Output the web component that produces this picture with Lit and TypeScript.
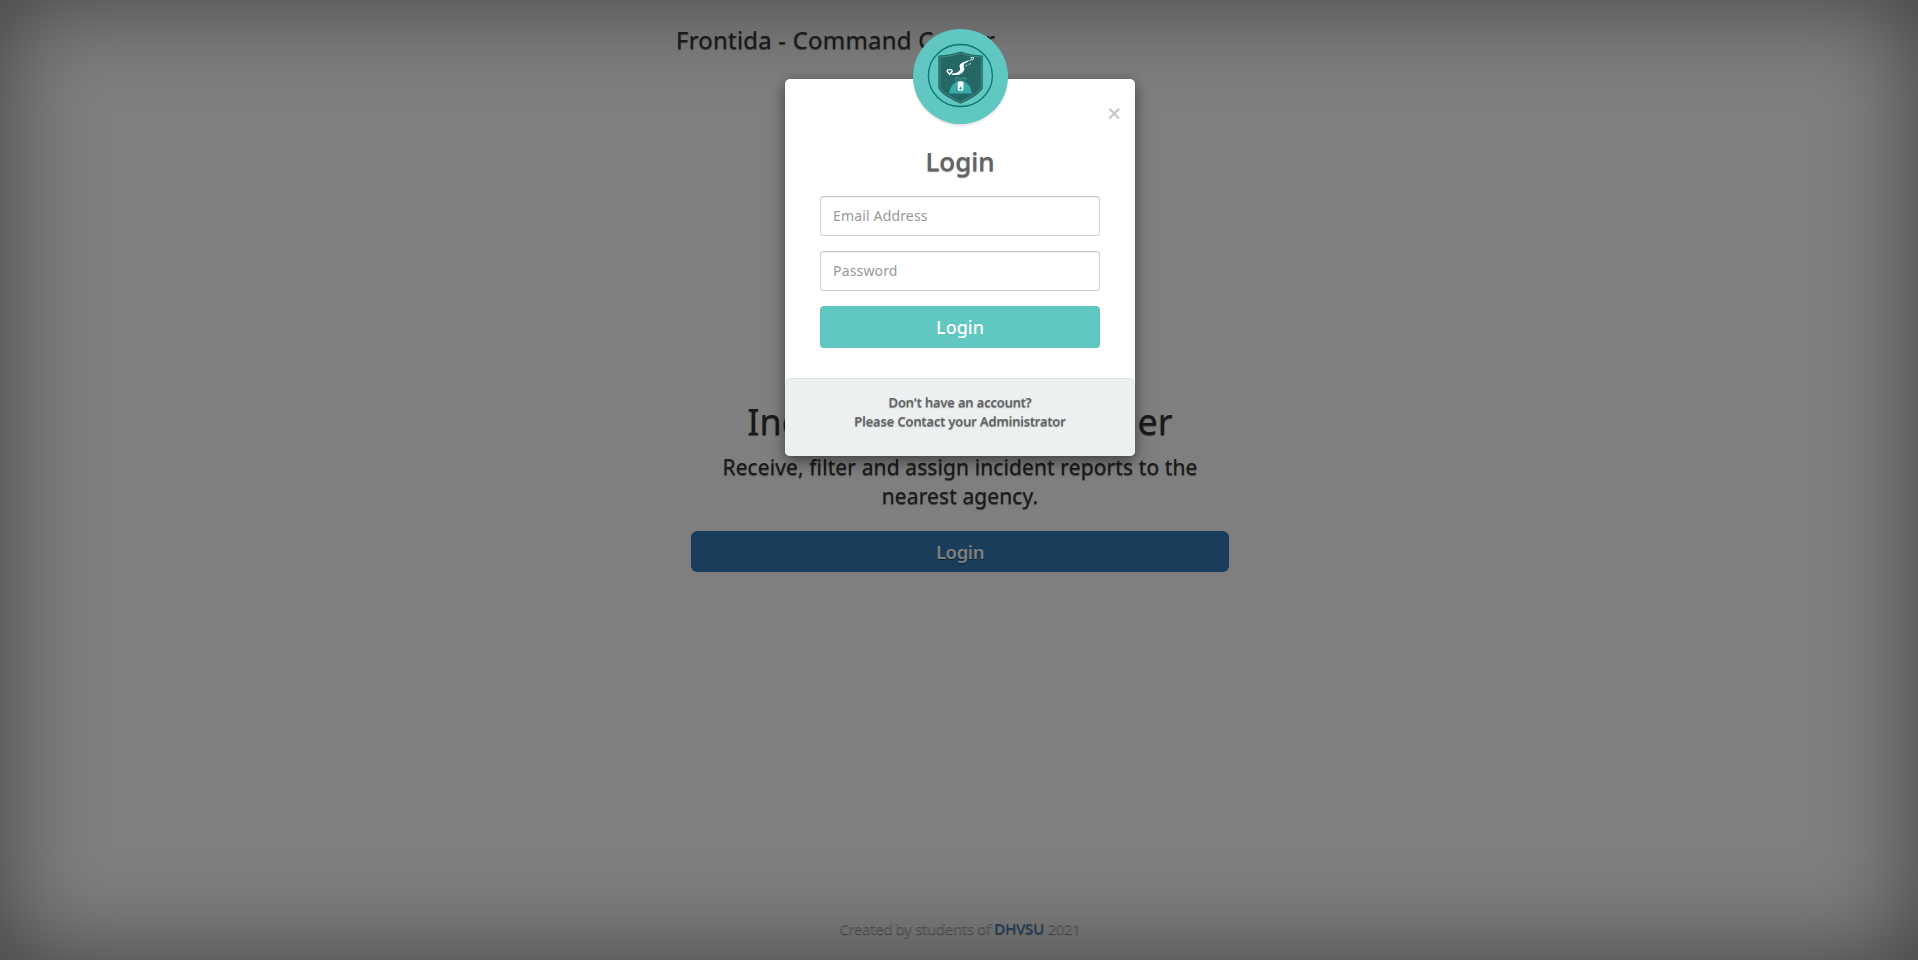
import { LitElement, html, css } from "lit";
import { customElement } from "lit/decorators.js";

@customElement("brand-emblem")
class BrandEmblem extends LitElement {
  static styles = css`
    :host { display: block; width: 95px; height: 95px; border-radius: 50%; background: #60c7c1; box-shadow: 0 2px 2px rgba(0, 0, 0, 0.1); }
    svg { display: block; }
  `;
  render() {
    return html`<svg width="95" height="95" viewBox="0 0 95 95" fill="none">
      <ellipse cx="47.4" cy="46.5" rx="32" ry="31" stroke="#0b7774" stroke-width="1.3" />
      <path d="M25.3 26.5Q38 26 47.5 22.6Q57 26 69.8 26.5V59Q67 66 47.5 74.8Q28 66 25.3 59Z" fill="#246765" />
      <path d="M27 28Q38 27.5 47.5 24.2Q57 27.5 68.2 28V58.3Q65.5 64.5 47.5 73Q29.5 64.5 27 58.3Z" stroke="#4c9996" stroke-width=".7" />
      <path d="M38.8 45.2C43 45 46.4 43.4 47.4 40.8C48.2 38.6 46.2 37.6 47.4 35.6C48.6 33.8 51.4 33.2 55 32.2C52.4 33.8 50.2 34.3 50.2 36.2C50.2 38 51.4 39.3 50.4 41.6C48.8 45 45 46.2 38.8 45.2Z" fill="#fff" stroke="#fff" stroke-width="1" />
      <path d="M54.5 32.2L58.5 31M52 37.2L54.5 36M55.8 35.4L58 34.6" stroke="#c7dcdb" stroke-width=".9" />
      <path d="M36.7 45.3L34.2 42.4Q33.8 40.6 36.6 40.6Q39.4 40.6 39.1 42.4Z" stroke="#fff" stroke-width="1.4" />
      <path d="M57.6 28.8Q59.4 28.2 61 28.8L59.3 31.2Z" stroke="#e7f1f0" stroke-width=".9" />
      <path d="M36 64.6Q37.2 55.6 43.6 52.6H51.4Q57.8 55.6 59 64.6Z" fill="#3aa9a8" />
      <path d="M42.6 48.8Q45.2 48 47.5 50.2Q49.8 48 52.4 48.8Q53.6 50.6 51.4 52.6H43.6Q41.4 50.6 42.6 48.8Z" fill="#2b7371" stroke="#349492" stroke-width="1" />
      <rect x="44.8" y="52.2" width="5.6" height="9.6" rx="1.6" fill="#fff" />
      <path d="M47.6 57.6V61M45.9 59.3H49.3" stroke="#38a5a5" stroke-width="1" />
      <path d="M35.8 64.6H59.2" stroke="#248e8e" stroke-width="1" />
    </svg>`;
  }
}

@customElement("login-dialog")
class LoginDialog extends LitElement {
  static styles = css`
    :host { display: block; width: 350px; }
    * { box-sizing: border-box; }
    .panel { position: relative; height: 377px; border-radius: 5px; background: #fff; box-shadow: 0 5px 15px rgba(0, 0, 0, 0.5); color: #636363; font-size: 13px; display: flex; flex-direction: column; }
    brand-emblem { position: absolute; left: 128px; top: -50px; }
    .close { position: absolute; right: 15px; top: 29px; display: block; border: 0; padding: 0; width: 12px; height: 12px; background: none; }
    .close svg { display: block; }
    .body { flex: 1; padding: 63px 35px 0; display: flex; flex-direction: column; }
    h4 { margin: 0 0 15px; height: 39px; line-height: 38px; font-size: 26px; font-weight: 500; text-align: center; }
    input { display: block; width: 100%; height: 40px; margin: 0 0 15px; padding: 5px 12px 7px; border: 1px solid #ccc; border-radius: 3px; background: #fff; box-shadow: inset 0 1px 1px rgba(0, 0, 0, 0.075); font: 14px "Noto Sans", sans-serif; letter-spacing: 0.16px; outline: 0; }
    input::placeholder { color: #999; opacity: 1; }
    .submit { height: 42px; border: 0; border-radius: 4px; background: #60c7c1; color: #fff; font: 500 18px "Noto Sans", sans-serif; padding: 0 0 1px; text-shadow: none; }
    .foot { height: 78px; padding: 14px 15px 16px; border-top: 1px solid #dee4e7; border-radius: 5px; background: #ecf0f1; text-align: center; line-height: 19px; font-weight: 500; letter-spacing: -0.06px; }
  `;
  render() {
    return html`<div class="panel">
      <brand-emblem></brand-emblem>
      <button class="close" aria-label="Close"><svg width="12" height="12" viewBox="0 0 12 12"><path d="M2 1.4L10.4 9.8M10.4 1.4L2 9.8" stroke="#c8c8c8" stroke-width="2.2" stroke-linecap="round" /></svg></button>
      <div class="body">
        <h4>Login</h4>
        <input type="text" placeholder="Email Address" />
        <input type="password" placeholder="Password" />
        <button class="submit">Login</button>
      </div>
      <div class="foot">Don't have an account?<br />Please Contact your Administrator</div>
    </div>`;
  }
}

@customElement("app-root")
class AppRoot extends LitElement {
  static styles = css`
    :host { display: block; height: 960px; position: relative; overflow: hidden; font-family: "Noto Sans", sans-serif; color: #333; text-shadow: 0 0.5px 1px rgba(0, 0, 0, 0.5); }
    * { box-sizing: border-box; }
    .cover { height: 960px; padding-left: 2px; background: #fff; box-shadow: inset 0 0 100px rgba(0, 0, 0, 0.5); display: flex; flex-direction: column; align-items: center; }
    header { width: 568px; padding-top: 23px; height: 401px; }
    h3 { margin: 0; font-size: 24px; line-height: 34px; font-weight: 400; white-space: nowrap; letter-spacing: 0.2px; }
    main { width: 538px; flex: 1; text-align: center; }
    h1 { margin: 0; font-size: 36px; line-height: 42px; font-weight: 400; white-space: nowrap; }
    .lead { margin: 10px 0 20px; font-size: 21px; line-height: 29px; letter-spacing: 0.11px; }
    .go { display: block; width: 100%; height: 41px; border: 0; border-radius: 6px; background: #337ab7; color: #fff; font: 600 18.5px "Noto Sans", sans-serif; letter-spacing: -0.4px; text-shadow: inherit; padding: 0 0 1px; }
    footer { height: 42px; font-size: 15px; line-height: 20px; letter-spacing: -0.36px; color: rgba(255, 255, 255, 0.5); }
    footer a { color: #337ab7; letter-spacing: -0.1px; }
    .scrim { position: absolute; inset: 0; background: rgba(0, 0, 0, 0.5); }
    login-dialog { position: absolute; left: 785px; top: 79px; }
  `;
  render() {
    return html`<div class="cover">
        <header><h3>Frontida - Command Center</h3></header>
        <main>
          <h1>Incident Reports Listener</h1>
          <p class="lead">Receive, filter and assign incident reports to the<br />nearest agency.</p>
          <button class="go">Login</button>
        </main>
        <footer>Created by students of <a>DHVSU</a> 2021</footer>
      </div>
      <div class="scrim"></div>
      <login-dialog></login-dialog>`;
  }
}
